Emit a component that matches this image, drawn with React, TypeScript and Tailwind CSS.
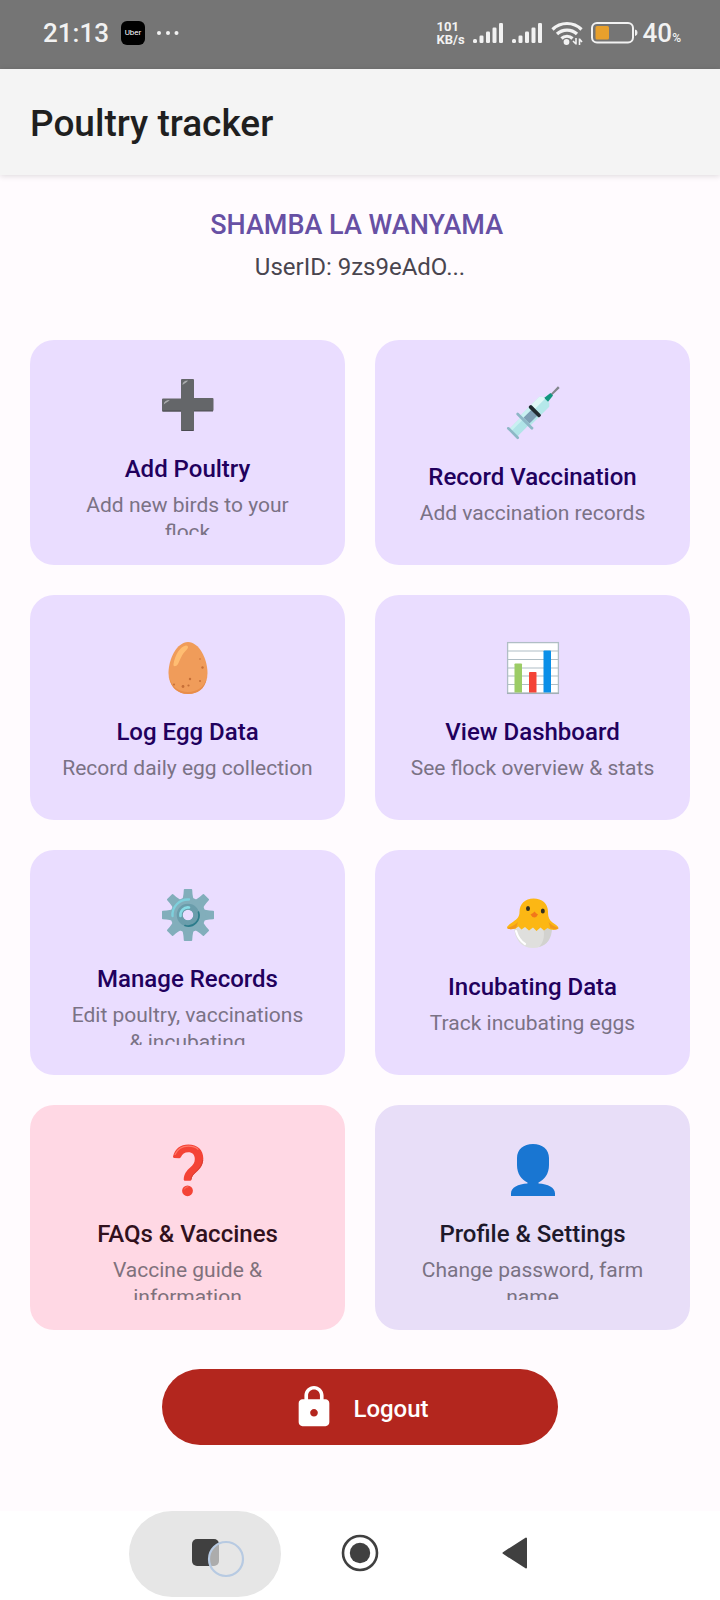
import type { ReactNode } from "react";
import { MdLock } from "react-icons/md";

const iconClass = "size-[52px] shrink-0 overflow-visible";

function PlusIcon() {
  return (
    <svg viewBox="0 0 52 52" className={iconClass} aria-hidden="true">
      <path d="M19 1a1 1 0 0 1 1-1h11a1 1 0 0 1 1 1v18h18.500a1 1 0 0 1 1 1v11a1 1 0 0 1-1 1H32v19a1 1 0 0 1-1 1H20a1 1 0 0 1-1-1V32.500H1a1 1 0 0 1-1-1V20.500a1 1 0 0 1 1-1h18z" fill="#646669" />
      <path d="M19.500 51.500h12M.5 32H19M32 32h19" stroke="#4a4b50" strokeWidth="1" />
      <path d="M20.500 6c0-3 2-4.500 5.500-4.500-1 2-3 2.500-5.500 4.500zM1.800 25.500c0-3 2-4.500 6-4.500-1.500 2-4 2.500-6 4.500z" fill="#a9abad" />
    </svg>
  );
}

function SyringeIcon() {
  return (
    <svg viewBox="-26 -26 52 52" className={iconClass} aria-hidden="true">
      <g transform="rotate(45)">
        <path d="M-1-26h2l.2-10.500h-2.400z" fill="#82868c" />
        <path d="M-2.800-18l1-8.500h3.600l1 8.500z" fill="#12967f" />
        <rect x="-5.500" y="-11" width="11" height="39" fill="#b0e4e7" />
        <rect x="-5.500" y="12" width="3" height="16" fill="#c9f0f1" />
        <path d="M-7-16l2.500-2.500h9L7-16v27H-7z" fill="#b5e8ea" />
        <path d="M-7-16l2.500-2.500h3v14H-7z" fill="#e0f8f7" />
        <rect x="-3.500" y="-1" width="8.500" height="11" fill="#7e9fb5" />
        <rect x="-7" y="-1" width="3.500" height="12" fill="#c9f0f1" />
        <rect x="-7.600" y="-4.500" width="15.200" height="3.800" rx="1.500" fill="#202b30" />
        <rect x="-11.500" y="10.200" width="23" height="2.800" rx="1.400" fill="#8db7c6" />
        <rect x="-8" y="27" width="16" height="2.600" rx="1.300" fill="#8db7c6" />
      </g>
    </svg>
  );
}

function EggIcon() {
  return (
    <svg viewBox="0 0 52 52" className={iconClass} aria-hidden="true">
      <path d="M26 0C37 0 45.500 17 45.500 31 45.500 44 37 52 26 52S6.500 44 6.500 31C6.500 17 15 0 26 0z" fill="#f09c5a" />
      <path d="M7.500 36C10 45 17 50 26 50s16-5 18.500-13C43 47 35.500 52 26 52S9 46 7.500 36z" fill="#e88d4a" />
      <path d="M11.500 22C13 13 18 4.500 24 3.500c3 .2 2.500 3-.5 5.500-4 4-5 8-7.500 13-2 3-5 3-4.500 0z" fill="#ffbd72" />
      <g fill="#c66f37">
        <circle cx="40.500" cy="25.500" r="1.200" />
        <circle cx="38" cy="17" r=".8" />
        <circle cx="28" cy="37" r="1.200" />
        <circle cx="38" cy="39" r="1" />
        <circle cx="21" cy="44.500" r="1.400" />
        <circle cx="26.500" cy="43.500" r="1.100" />
        <circle cx="12" cy="42.500" r="1" />
      </g>
    </svg>
  );
}

function ChartIcon() {
  return (
    <svg viewBox="0 0 52 52" className={iconClass} aria-hidden="true">
      <rect x=".5" y=".5" width="51" height="51" fill="#fff" />
      <path d="M0 9h52M0 17.500h52M0 26h52M0 34h52M0 42.500h52" stroke="#b0bec5" strokeWidth="1.100" />
      <rect x=".6" y=".6" width="50.800" height="50.800" fill="none" stroke="#b0bec5" strokeWidth="1.300" />
      <path d="M0 51.300h52" stroke="#a3b0b6" strokeWidth="1.400" />
      <path d="M7.500 50.500V22.300q0-.8.8-.8h5.900q.8 0 .8.800v28.200z" fill="#9ccc65" />
      <path d="M22 50.500V30.800q0-.8.8-.8h5.900q.8 0 .8.800v19.700z" fill="#f44336" />
      <path d="M36.500 50.500V9.300q0-.8.8-.8h5.900q.8 0 .8.800v41.200z" fill="#0b8fe8" />
    </svg>
  );
}

const toothAngles = [0, 45, 90, 135, 180, 225, 270, 315];

function GearIcon() {
  return (
    <svg viewBox="-26 -26 52 52" className={iconClass} aria-hidden="true">
      {toothAngles.map((angle) => (
        <path key={angle} d="M-6.500-14Q-4.500-17-4.200-25.200-4.200-26-3.400-26h6.800q.8 0 .8.800Q4.500-17 6.500-14z" fill="#82aebb" transform={`rotate(${angle})`} />
      ))}
      <circle r="11.500" fill="none" stroke="#82aebb" strokeWidth="12" />
      <path d="M-15.500 1A15.500 15.500 0 0 1 1-15.500" fill="none" stroke="#7ed0dc" strokeWidth="2.400" strokeLinecap="round" />
      <circle r="8.300" fill="none" stroke="#6a9dab" strokeWidth="6" />
      <path d="M-7.500 1A7.500 7.500 0 0 1 1-7.500" fill="none" stroke="#86dbe5" strokeWidth="2.600" strokeLinecap="round" />
      <path d="M10.500-3A10.800 10.800 0 0 1-3 10.500" fill="none" stroke="#2c7c8b" strokeWidth="1.700" strokeLinecap="round" />
    </svg>
  );
}

function ChickIcon() {
  return (
    <svg viewBox="0 0 52 52" className={iconClass} aria-hidden="true">
      <path d="M7 28C7 43 15 51 26 51s19-8 19-23z" fill="#dfdfdd" />
      <path d="M36 30h9c0 12-5 18-13 20 5-5 6-12 4-20z" fill="#d2d2cf" />
      <path d="M9 34C11 41 14 44.500 18 47" fill="none" stroke="#fff" strokeWidth="2.200" strokeLinecap="round" />
      <path d="M26.500 1.500C18 1.500 12.500 7 12.500 15c0 5-2.500 7-6 9.500C3 27 .5 28.500 0 30.500c.5 2 5 2 8.500 1l3-2 3 3 3.500-2.500 4 3.500 4-3 3.500 3.500 4-3.500 3.500 3 3.500-2.500 3 1.500c3 .8 7.500.5 8-1.500-.5-2-3-3.500-6-5.500-3-2.300-4.500-5-4.500-9.500C41.500 7 35.500 1.500 26.500 1.500z" fill="#fcb714" />
      <path d="M.3 31C4 30 8 28 11 25l-2 6.300c-3 1-8 1.300-8.700-.3zM51.500 31C48 30 44.500 28 41.500 25l2 6.300c3 1 7.300 1.300 8-.3z" fill="#f19a1e" />
      <ellipse cx="21" cy="11.500" rx="2" ry="2.500" fill="#35301f" />
      <ellipse cx="35.800" cy="14" rx="2" ry="2.500" fill="#35301f" />
      <path d="M23.500 17.500q3-1.300 4-3 1.500 2 3.500 3-1 2.500-3.700 3-2.500-.5-3.800-3z" fill="#f2771a" />
    </svg>
  );
}

function QuestionIcon() {
  return (
    <svg viewBox="0 0 52 52" className={iconClass} aria-hidden="true">
      <path d="M11 12.500C13 4.500 18.500.5 26.300.5 35.500.5 41.300 6 41.300 14.500c0 6.500-3 10-6.800 13.500-3.500 3.200-4.700 4.500-5 7.500q-.2 1.300-1.500 1.300h-5q-1.300 0-1.300-1.300c.3-5.500 2.500-8.500 6.500-12 3.200-2.800 4.600-4.700 4.600-8.500 0-4.300-2.400-6.800-6.600-6.800-3.600 0-5.900 1.500-7.200 4.900q-.5 1.200-1.800 1.100l-4.900-.2q-1.600-.1-1.300-1.500z" fill="#f44336" />
      <circle cx="25.500" cy="46.800" r="5.400" fill="#f44336" />
      <path d="M13 10.500C15.500 5 20 2.300 26.500 2.200c4 0 7 1 9.500 3" fill="none" stroke="#ff7869" strokeWidth="1.200" strokeLinecap="round" />
      <path d="M40.700 16c-.4 5-3 8-6.500 11.500-3 2.700-4.800 4.500-5.200 8" fill="none" stroke="#d63c32" strokeWidth="1" />
      <path d="M22.500 45c.7-1.500 1.700-2.200 3.500-2.200" fill="none" stroke="#ff7869" strokeWidth="1" strokeLinecap="round" />
    </svg>
  );
}

function PersonIcon() {
  return (
    <svg viewBox="0 0 52 52" className={iconClass} aria-hidden="true">
      <path d="M26 0c9.500 0 16 5.500 16 14v7c0 9-4.500 14.500-10.500 17.500v1C41 40 48 43.500 48 49.500V52H4v-2.500C4 43.500 11 40 20.500 39.500v-1C14.500 35.500 10 30 10 21v-7C10 5.500 16.500 0 26 0z" fill="#1976d2" />
    </svg>
  );
}

type Tone = "violet" | "pink" | "lavender";

const cardTones: Record<Tone, string> = {
  violet: "bg-[#eaddff] text-[#21005d]",
  pink: "bg-[#ffd8e4] text-[#31111d]",
  lavender: "bg-[#e8def8] text-[#1d192b]",
};

const captionTones: Record<Tone, string> = {
  violet: "text-[#7a7285]",
  pink: "text-[#80717c]",
  lavender: "text-[#797283]",
};

type Action = { title: string; caption: string; tone: Tone; icon: ReactNode };

const actions: Action[] = [
  { title: "Add Poultry", caption: "Add new birds to your\nflock", tone: "violet", icon: <PlusIcon /> },
  { title: "Record Vaccination", caption: "Add vaccination records", tone: "violet", icon: <SyringeIcon /> },
  { title: "Log Egg Data", caption: "Record daily egg collection", tone: "violet", icon: <EggIcon /> },
  { title: "View Dashboard", caption: "See flock overview & stats", tone: "violet", icon: <ChartIcon /> },
  { title: "Manage Records", caption: "Edit poultry, vaccinations\n& incubating", tone: "violet", icon: <GearIcon /> },
  { title: "Incubating Data", caption: "Track incubating eggs", tone: "violet", icon: <ChickIcon /> },
  { title: "FAQs & Vaccines", caption: "Vaccine guide &\ninformation", tone: "pink", icon: <QuestionIcon /> },
  { title: "Profile & Settings", caption: "Change password, farm\nname", tone: "lavender", icon: <PersonIcon /> },
];

function ActionCard({ title, caption, tone, icon }: Action) {
  return (
    <button type="button" className={`flex aspect-[7/5] flex-col items-center justify-center rounded-3xl p-[30px] text-center ${cardTones[tone]}`}>
      <span className="flex max-h-full w-full flex-col items-center overflow-hidden pt-[9px]">
        {icon}
        <span className="mt-6 shrink-0 text-[24px] leading-7 font-medium">{title}</span>
        <span className={`mt-[9px] shrink-0 text-[21px] leading-[27px] whitespace-pre-line ${captionTones[tone]}`}>{caption}</span>
      </span>
    </button>
  );
}

function SignalIcon() {
  return (
    <svg viewBox="0 0 31 20" className="h-5 w-[31px]" fill="#f2f2f2" role="img" aria-label="Mobile signal">
      <rect x="0" y="16" width="4" height="4" rx="1.500" />
      <rect x="6.500" y="12.500" width="4" height="7.500" rx="1.300" />
      <rect x="13" y="8.500" width="4" height="11.500" rx="1.300" />
      <rect x="19.500" y="4.500" width="4" height="15.500" rx="1.300" />
      <rect x="26" y="0" width="4" height="20" rx="1.300" />
    </svg>
  );
}

function WifiIcon() {
  return (
    <svg viewBox="0 0 32 24" className="h-6 w-8" role="img" aria-label="Wi-Fi">
      <g fill="none" stroke="#f2f2f2" strokeWidth="3.200">
        <path d="M1.500 8.500C9.500.5 22.500.5 30.500 8.500" />
        <path d="M6 13c5.500-5.300 14.500-5.300 20 0" />
        <path d="M10.500 17.500c3-3 8-3 11 0" />
      </g>
      <circle cx="15.500" cy="21" r="2.900" fill="#f2f2f2" />
      <path d="M25 17v6.500M22 20l3 3M28.500 24v-6.500M31 21l-2.500-3" fill="none" stroke="#f2f2f2" strokeWidth="1.600" />
    </svg>
  );
}

function BatteryIcon() {
  return (
    <svg viewBox="0 0 48 22" className="h-[22px] w-12" role="img" aria-label="Battery">
      <rect x="1" y="1" width="41" height="19.500" rx="5" fill="none" stroke="#f2f2f2" strokeWidth="2" />
      <rect x="4.500" y="4" width="13.500" height="13.500" rx="1.500" fill="#e8a02c" />
      <path d="M44.500 8v5.500q1.500-.3 1.500-2.800t-1.500-2.700z" fill="#f2f2f2" stroke="#f2f2f2" />
    </svg>
  );
}

function StatusBar() {
  return (
    <div className="flex h-[69px] items-center justify-between bg-[#757575] pr-[39px] pb-1 pl-[43px] text-[#f2f2f2]">
      <div className="flex items-center gap-3">
        <span className="text-[26px] leading-8 font-medium">21:13</span>
        <span className="flex size-6 items-center justify-center rounded-md bg-black text-[8px] leading-none text-white">Uber</span>
        <svg viewBox="0 0 22 4" className="h-1 w-[22px]" fill="#f2f2f2" aria-hidden="true">
          <circle cx="2" cy="2" r="2" />
          <circle cx="11" cy="2" r="2" />
          <circle cx="19.500" cy="2" r="2" />
        </svg>
      </div>
      <div className="flex items-center gap-2">
        <span className="flex flex-col text-[13px] leading-[13px] font-bold">
          <span>101</span>
          <span>KB/s</span>
        </span>
        <SignalIcon />
        <SignalIcon />
        <WifiIcon />
        <BatteryIcon />
        <span className="-ml-1 text-[26px] leading-8 font-medium">
          40<span className="text-[12px] leading-none">%</span>
        </span>
      </div>
    </div>
  );
}

function NavigationBar() {
  return (
    <nav className="flex h-[89px] justify-center gap-[3px] bg-white">
      <button type="button" aria-label="Recent apps" className="h-[86px] w-[152px] rounded-full bg-[#e6e6e6]">
        <svg viewBox="0 0 152 86" className="size-full" aria-hidden="true">
          <rect x="63" y="28" width="27" height="27" rx="5" fill="#404040" />
          <circle cx="97" cy="48" r="17" fill="#e6e6e6" fillOpacity=".65" stroke="#b7cae2" strokeWidth="2.200" />
        </svg>
      </button>
      <button type="button" aria-label="Home" className="flex h-[84px] w-[152px] items-center justify-center">
        <svg viewBox="0 0 38 38" className="size-[38px]" aria-hidden="true">
          <circle cx="19" cy="19" r="17" fill="none" stroke="#404040" strokeWidth="2.600" />
          <circle cx="19" cy="19" r="10.200" fill="#404040" />
        </svg>
      </button>
      <button type="button" aria-label="Back" className="flex h-[84px] w-[152px] items-center justify-center">
        <svg viewBox="0 0 26 32" className="h-8 w-[26px]" aria-hidden="true">
          <path d="M1.500 16L24 1.500v29z" fill="#404040" stroke="#404040" strokeWidth="2" strokeLinejoin="round" />
        </svg>
      </button>
    </nav>
  );
}

export default function App() {
  return (
    <div className="flex min-h-screen flex-col bg-[#fffbfe] font-[Roboto,sans-serif]">
      <StatusBar />
      <header className="flex h-[106px] items-center bg-[#f4f4f4] px-[30px] pt-1 shadow-[0_1px_6px_rgba(0,0,0,0.14)]">
        <h1 className="text-[37px] leading-[48px] font-medium text-[#1f1f1f]">Poultry tracker</h1>
      </header>
      <main className="flex flex-1 flex-col px-[30px] pt-8">
        <h2 className="text-center text-[27px] leading-9 font-medium whitespace-pre text-[#6750a4]">{"SHAMBA LA WANYAMA "}</h2>
        <p className="mt-2.5 text-center text-[24px] leading-7 text-[#49454f]">UserID: 9zs9eAdO...</p>
        <div className="mt-[59px] grid grid-cols-2 gap-[30px]">
          {actions.map((action) => (
            <ActionCard key={action.title} {...action} />
          ))}
        </div>
        <button type="button" className="mt-[39px] flex h-[76px] w-3/5 items-center justify-center gap-4 self-center rounded-full bg-[#b3261e] text-[24px] leading-8 font-medium text-white">
          <MdLock className="size-[46px]" aria-hidden="true" />
          <span className="pt-1">Logout</span>
        </button>
      </main>
      <NavigationBar />
    </div>
  );
}
